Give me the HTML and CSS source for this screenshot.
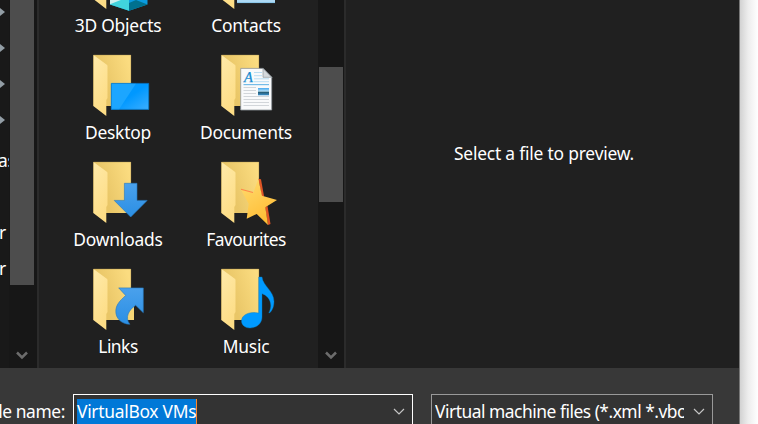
FILE: index.html
```html
<!DOCTYPE html>
<html lang="en-GB">
<head>
<meta charset="utf-8">
<title>Open</title>
<link rel="stylesheet" href="styles.css">
</head>
<body>
<svg class="defs" width="0" height="0" aria-hidden="true">
  <defs>
    <linearGradient id="back" x1="0" y1=".7" x2="1" y2=".3"><stop offset=".3" stop-color="#e9c667"/><stop offset="1" stop-color="#fbdc80"/></linearGradient>
    <linearGradient id="flap" x1="0" y1="0" x2=".4" y2="1"><stop stop-color="#ffeaa9"/><stop offset="1" stop-color="#fddd86"/></linearGradient>
    <linearGradient id="screen" x1="0" y1="0" x2="1" y2="1"><stop offset=".5" stop-color="#0098ff"/><stop offset="1" stop-color="#3baeff"/></linearGradient>
    <linearGradient id="arrow" x1="0" y1="0" x2="0" y2="1"><stop stop-color="#4aa1ec"/><stop offset="1" stop-color="#2b8fe4"/></linearGradient>
    <linearGradient id="gold" x1="0" y1="0" x2=".5" y2="1"><stop stop-color="#ffdc70"/><stop offset="1" stop-color="#ffbd35"/></linearGradient>
    <linearGradient id="photo" x1="0" y1="0" x2="0" y2="1"><stop stop-color="#47a9ee"/><stop offset=".45" stop-color="#b7e1f7"/><stop offset=".55" stop-color="#24576b"/><stop offset="1" stop-color="#3b91ce"/></linearGradient>
    <g id="folder">
      <path d="M7.3 2H45V53H7.3Z" fill="url(#back)"/>
      <path d="M7.5 2L20.8 11.7Q21.5 12.2 21.5 13V45L20.3 47V63L7.3 53Z" fill="url(#flap)"/>
      <path d="M7.5 53V2H44.8V52" fill="none" stroke="#a78e4c" stroke-opacity=".55" stroke-width=".7"/>
    </g>
  </defs>
</svg>
<div class="screen">
  <main class="dialog">
    <div class="panes">
      <nav class="tree">
        <div class="row"><i class="tri"></i></div>
        <div class="row"><i class="tri"></i></div>
        <div class="row"><i class="tri"></i></div>
        <div class="row"><i class="tri"></i></div>
        <div class="row"><span class="clipped">as</span></div>
        <div class="row"></div>
        <div class="row"><span>r</span></div>
        <div class="row"><span>r</span></div>
      </nav>
      <div class="scroll nav-scroll"><div class="thumb"></div><svg class="down" viewBox="0 0 12 10"><path d="M1 1.5L6 6.5L11 1.5"/></svg></div>
      <div class="divider"></div>
      <section class="files">
        <div class="tile"><svg class="icon" viewBox="0 0 64 64"><use href="#folder"/><path d="M24 44H61.5V58.5L43 64.7L24 58.5Z" fill="#0a9be0"/><path d="M24 44H43V64.7L24 58.5Z" fill="#41d3dd"/><path d="M24 44L43 50L36 53.5L24 58.3Z" fill="#cdf0f0"/><path d="M43 57L50 54L61.5 58.4L43 64.7Z" fill="#00718f"/></svg><span class="label">3D Objects</span></div>
        <div class="tile"><svg class="icon" viewBox="0 0 64 64"><use href="#folder"/><path d="M23 28H61V57H23Z" fill="#add9f5"/><path d="M23 56.6H61" stroke="#7fc0e4" stroke-width=".8"/></svg><span class="label">Contacts</span></div>
        <div class="tile"><svg class="icon" viewBox="0 0 64 64"><use href="#folder"/><path d="M25.3 30.4H62.7V56.4H25.3Z" fill="url(#screen)"/><path d="M25.3 30.4H50L33 56.4H25.3Z" fill="#1ca6ff"/><path d="M25.3 30.4H62.7V56.4H25.3Z" fill="none" stroke="#0778c8" stroke-width=".8"/></svg><span class="label">Desktop</span></div>
        <div class="tile"><svg class="icon" viewBox="0 0 64 64"><use href="#folder"/><path d="M26.7 15.4H49L57.7 24.3V57H26.7Z" fill="#f9fafb" stroke="#8e969b" stroke-width=".8"/><path d="M49 15.4V24.3H57.7Z" fill="#d5d9dc" stroke="#8e969b" stroke-width=".7"/><path d="M40 19.5H48M40 22.7H48M40 25.8H55M40 28.7H55" stroke="#a8d5f0" stroke-width=".8"/><path d="M29.5 31.6H55" stroke="#75bce8" stroke-width="1.2"/><path d="M29.5 34.5H42M29.5 37.5H42M29.5 40.5H42M29.5 43.5H55M29.5 46.5H55M29.5 49.5H55M29.5 52.5H55" stroke="#c8cdd2" stroke-width=".8"/><path d="M44 35H55V42.3H44Z" fill="url(#photo)"/><text class="glyph" x="30" y="28.5">A</text></svg><span class="label">Documents</span></div>
        <div class="tile"><svg class="icon" viewBox="0 0 64 64"><use href="#folder"/><path d="M38.4 23.3H51V40.4H61.2L44.7 57L28.2 40.4H38.4Z" fill="url(#arrow)" stroke="#2377bd" stroke-width=".6"/></svg><span class="label">Downloads</span></div>
        <div class="tile"><svg class="icon" viewBox="0 0 64 64"><use href="#folder"/><path d="M44.3 18.7L47 19.2L50 36L48 38ZM51 47L53.5 46L56.5 64L54 65Z" fill="#df5525"/><path d="M44.3 19L48 35.7L63 40L51.3 47.3L54 65L42.7 54L32.7 58.7L34.7 43.7L27 29.7L39.3 32.7Z" fill="url(#gold)"/><path d="M27 29.2L39 32.5" stroke="#ff8748" stroke-width="1.1"/></svg><span class="label fav">Favourites</span></div>
        <div class="tile"><svg class="icon" viewBox="0 0 64 64"><use href="#folder"/><path d="M44 35H48V53H44Z" fill="#f7d675"/><path d="M32.7 20.9H57.3V45.7L49.6 38.2C43 43 38.5 50 43.8 57.3C35 57 29.8 51 29.8 44.5C29.8 38 33.5 34 39.7 28.5Z" fill="url(#arrow)" stroke="#2377bd" stroke-width=".6"/></svg><span class="label links">Links</span></div>
        <div class="tile"><svg class="icon" viewBox="0 0 64 64"><use href="#folder"/><path d="M44.7 10H48C49 19 60 24 60 34.5C60 40 58 44 55.4 46H54.8C60 36 54 28.5 48 26.7V50C48 57 42 61 36 61C31 61 27.5 58 27.5 54C27.5 48 35 44 44.7 46Z" fill="#009aff" stroke="#087abd" stroke-width=".4"/></svg><span class="label">Music</span></div>
      </section>
      <div class="scroll file-scroll"><div class="thumb"></div><svg class="down" viewBox="0 0 12 10"><path d="M1 1.5L6 6.5L11 1.5"/></svg></div>
      <div class="divider"></div>
      <aside class="preview"><p>Select a file to preview.</p></aside>
    </div>
    <footer class="controls">
      <label class="name">File name:</label>
      <div class="combo active"><span class="selected">VirtualBox VMs</span><svg class="chevron" viewBox="0 0 12 7"><path d="M1 1L6 6L11 1"/></svg></div>
      <div class="combo filter"><span class="value">Virtual machine files (*.xml *.vbox)</span><svg class="chevron" viewBox="0 0 12 7"><path d="M1 1L6 6L11 1"/></svg></div>
    </footer>
  </main>
  <div class="shade"></div>
</div>
</body>
</html>
```
FILE: styles.css
```css
* { box-sizing: border-box; }
body {
  margin: 0;
  overflow: hidden;
  background: #fff;
  color: #fff;
  font: 17.4px/24px "Noto Sans", "Open Sans", sans-serif;
  letter-spacing: -.2px;
}
.defs { display: block; }
.screen { display: flex; width: 758px; height: 424px; overflow: hidden; }
.dialog { width: 740px; border-right: 1px solid #777; background: #383838; }
.shade { flex: 1; background: linear-gradient(90deg, #d2d2d2, #ededed 45%, #fff); }
.panes { display: flex; height: 368px; overflow: hidden; background: #202020; }
.tree { width: 9px; background: #191919; overflow: hidden; margin-top: -2px; }
.row { display: flex; align-items: center; height: 36px; white-space: nowrap; overflow: hidden; }
.row span { margin: -1px 0 0 -1px; }
.row .clipped { margin-left: -2px; }
.tri { margin-bottom: 8px; border-left: 5px solid #929da5; border-top: 4px solid transparent; border-bottom: 4px solid transparent; }
.scroll { display: flex; flex-direction: column; align-items: center; justify-content: space-between; background: #171717; padding-bottom: 7px; }
.nav-scroll { width: 28px; padding-right: 2px; }
.file-scroll { width: 26px; padding-top: 67px; }
.thumb { width: 24px; background: #4d4d4d; }
.nav-scroll .thumb { height: 285px; }
.file-scroll .thumb { height: 135px; }
.down { width: 12px; height: 10px; fill: none; stroke: #6c6c6c; stroke-width: 2.5; }
.divider { width: 2px; background: #2b2b2b; }
.files { display: grid; grid-template-columns: 128px 128px; grid-auto-rows: 107px; width: 279px; padding-left: 15px; margin-top: -54px; align-content: start; }
.tile { display: flex; flex-direction: column; align-items: center; gap: 3px; }
.icon { width: 64px; height: 64px; overflow: visible; }
.glyph { font: italic 14.5px "Liberation Serif", serif; fill: #168bd0; stroke: #168bd0; stroke-width: .25px; }
.label { white-space: nowrap; }
.fav { letter-spacing: -.55px; }
.links { letter-spacing: -.5px; }
.preview { display: flex; flex: 1; justify-content: center; padding: 141px 0 0 3px; }
.preview p { margin: 0; }
.controls { display: flex; height: 56px; padding-top: 26px; }
.name { display: flex; justify-content: flex-end; width: 65px; margin-right: 8px; padding-top: 5px; white-space: nowrap; letter-spacing: -.4px; }
.combo { display: flex; align-items: center; justify-content: space-between; height: 36px; border: 1px solid #999; background: #333; padding: 0 7px 0 3px; white-space: nowrap; }
.active { width: 340px; border-color: #fff; }
.filter { width: 282px; margin-left: 18px; letter-spacing: -.48px; }
.selected { height: 26px; line-height: 25px; background: #0078d7; border-right: 1px solid #ff872b; letter-spacing: -.28px; }
.value { width: 249px; overflow: hidden; margin-top: -2px; }
.chevron { width: 12px; height: 7px; margin-bottom: 2px; fill: none; stroke: #c5c5c5; stroke-width: 1.2; flex: none; }
```
